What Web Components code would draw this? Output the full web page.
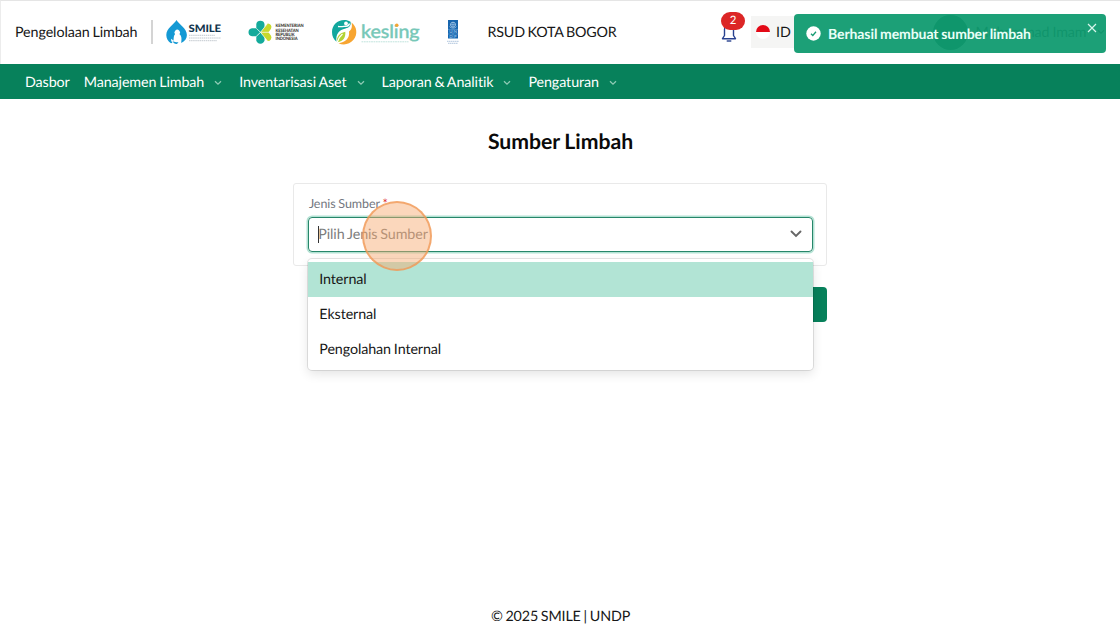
<!DOCTYPE html>
<html lang="id">
<head>
<meta charset="utf-8">
<title>Sumber Limbah</title>
<style>
    html, body {
        margin: 0;
        height: 100%;
        overflow: hidden;
        background: #fff;
        font-family: Lato, "Open Sans", sans-serif;
        font-size: 14.3px;
        letter-spacing: -.1px;
        word-spacing: -.7px;
        color: #171717;
        text-rendering: geometricPrecision;
    }
</style>
</head>
<body>
<smile-page>
    <app-header slot="header" program="Pengelolaan Limbah" entity="RSUD KOTA BOGOR"></app-header>
    <nav-bar slot="nav">
        <nav-item>Dasbor</nav-item>
        <nav-item menu>Manajemen Limbah</nav-item>
        <nav-item menu>Inventarisasi Aset</nav-item>
        <nav-item menu>Laporan &amp; Analitik</nav-item>
        <nav-item menu>Pengaturan</nav-item>
    </nav-bar>
    <form-card>
        <select-field label="Jenis Sumber" placeholder="Pilih Jenis Sumber">
            <select-option active>Internal</select-option>
            <select-option>Eksternal</select-option>
            <select-option>Pengolahan Internal</select-option>
        </select-field>
    </form-card>
    <span slot="footer">© 2025 SMILE | UNDP</span>
</smile-page>
<toast-message>Berhasil membuat sumber limbah</toast-message>
<click-marker></click-marker>

<script>
class BaseElement extends HTMLElement {
    constructor() {
        super();
        this.attachShadow({ mode: 'open' });
        const template = document.createElement('template');
        template.innerHTML = this.render();
        this.shadowRoot.appendChild(template.content.cloneNode(true));
    }

    render() {
        return '<slot></slot>';
    }
}

class SmilePage extends BaseElement {
    render() {
        return `
            <style>
                :host {
                    display: flex;
                    flex-direction: column;
                    height: 100%;
                }

                main {
                    flex: 1;
                    display: flex;
                    flex-direction: column;
                    align-items: center;
                    padding-top: 29px;
                }

                h1 {
                    margin: 0 0 28px 1px;
                    font-size: 21.2px;
                    line-height: 27px;
                    font-weight: 700;
                    letter-spacing: 0;
                    color: #0a0a0a;
                }

                footer {
                    padding-left: 1px;
                    text-align: center;
                    line-height: 18px;
                    letter-spacing: -.15px;
                }
            </style>
            <slot name="header"></slot>
            <slot name="nav"></slot>
            <main>
                <h1>Sumber Limbah</h1>
                <slot></slot>
            </main>
            <footer><slot name="footer"></slot></footer>
        `;
    }
}

class LogoSmile extends BaseElement {
    render() {
        return `
            <style>:host { display: block; width: 56px; height: 25px; } svg { display: block; overflow: visible; }</style>
            <svg width="56" height="25" viewBox="0 0 56 25">
                <path d="M10.500 0C8.500 4 .3 8 .3 15c0 3.500 1.700 6.500 4.700 8.300l1.500-.5C5.300 21.500 4.800 20 5.300 18.800l2.200 2C7.800 18 7.500 15.800 9 14.200a2.800 2.800 0 1 1 4.500 0c2.300 1.600 2.200 4.800 1.700 8.800 3.600-1.500 5.700-4.500 5.700-8C20.900 8 12.500 4 10.500 0z" fill="#1499d4"/>
                <path d="M6.500 20.700c1.500 1.400 3.500 1.700 6 1.200l-1.500 2c-2 .2-3.700-.8-4.500-3.200z" fill="#1499d4"/>
                <text x="22.500" y="12.200" font-family="Lato, sans-serif" font-size="10.200" font-weight="900" fill="#12344d" textLength="32.500" lengthAdjust="spacingAndGlyphs">SMILE</text>
                <g stroke="#b2bac2" stroke-width=".8" stroke-dasharray="1.500 .6">
                    <path d="M23 15.300h26"/><path d="M23 18h32"/><path d="M23 20.700h28"/>
                </g>
            </svg>
        `;
    }
}

class LogoKemenkes extends BaseElement {
    render() {
        return `
            <style>:host { display: block; width: 56px; height: 25px; } svg { display: block; overflow: visible; }</style>
            <svg width="56" height="25" viewBox="0 0 56 25">
                <path d="M8.300 4a4.200 4 0 0 1 8.200 0v5l-4 3.500-4.200-4z" fill="#13aa9b"/>
                <path d="M4 8.300h4.500l4 4-4 4H4a4 4 0 0 1-3.500-4 4 4 0 0 1 3.500-4z" fill="#13aa9b"/>
                <path d="M8.300 16.500l4.200-4 4 3.500v4.500a4.200 4 0 0 1-8.200 0z" fill="#13aa9b"/>
                <path d="M12.500 12.300L19.500 3.500a3.600 3.600 0 0 1 3.500 5.300l-2.500 3.500 2.500 3.500a3.600 3.600 0 0 1-3.500 5.300z" fill="#c6d92d"/>
                <path d="M8.300 8.300l4.200 4-4.200 4M12.500 12.300H23M12.500 12.300l7-8.800M12.500 12.300l7 8.800" fill="none" stroke="#fff" stroke-width=".7"/>
                <g font-family="Lato, sans-serif" font-size="4.500" font-weight="900" fill="#37342f">
                    <text x="27.500" y="7.200" textLength="28" lengthAdjust="spacingAndGlyphs">KEMENTERIAN</text>
                    <text x="27.500" y="11.600" textLength="23" lengthAdjust="spacingAndGlyphs">KESEHATAN</text>
                    <text x="27.500" y="16" textLength="19" lengthAdjust="spacingAndGlyphs">REPUBLIK</text>
                    <text x="27.500" y="20.400" textLength="22" lengthAdjust="spacingAndGlyphs">INDONESIA</text>
                </g>
            </svg>
        `;
    }
}

class LogoKesling extends BaseElement {
    render() {
        return `
            <style>:host { display: block; width: 88px; height: 25px; } svg { display: block; overflow: visible; }</style>
            <svg width="88" height="25" viewBox="0 0 88 25">
                <path d="M12.500 0C5 0 0 5.500 0 12c0 4 1.500 7.500 4.500 9.700C3.500 14 7 10 13.500 8.500 17 7.800 19.500 5.500 18.500 1.800 16.500.6 14.500 0 12.500 0z" fill="#12a79d"/>
                <path d="M19.500 2.500c5.500 4 6.500 12 2 17.300-4 4.800-10 5.700-15 3.400 6.500-.7 11.500-4.700 10.500-11.700 2.500-1.500 3.500-5 2.500-9z" fill="#f7a531"/>
                <path d="M5.300 22.300c-1.300-5 1.500-9 8-10.500.5 5.500-1.800 9.800-8 10.500z" fill="#b4d334"/>
                <circle cx="14" cy="3.400" r="1.900" fill="#fff"/>
                <path d="M6 6.500c3 .5 5 0 7.500-.3 2 .2 3.500-.8 4-2.700M5.300 22c1-3.500 2.800-6 5.200-8" fill="none" stroke="#fff" stroke-width="1.300"/>
                <text x="29" y="18" font-family="Lato, sans-serif" font-size="18.500" font-weight="500" fill="#77c8b8" stroke="#77c8b8" stroke-width=".35" textLength="58.500" lengthAdjust="spacingAndGlyphs">kesling</text>
                <circle cx="64.800" cy="5.200" r="1.700" fill="#f7a531"/>
                <path d="M29.500 21.800h47" stroke="#bfe3dc" stroke-width="1" stroke-dasharray="1.800 .6"/>
            </svg>
        `;
    }
}

class LogoUndp extends BaseElement {
    render() {
        return `
            <style>:host { display: block; width: 12px; height: 25px; } svg { display: block; overflow: visible; }</style>
            <svg width="12" height="25" viewBox="0 0 12 25">
                <path d="M1 0h10v18.500H1z" fill="#1765ae"/>
                <circle cx="6" cy="4.700" r="2.500" fill="none" stroke="#b9d5ee" stroke-width=".8"/>
                <path d="M3.500 4.700h5M6 2.200v5M2.500 6.500C3.500 8.700 8.500 8.700 9.500 6.500" fill="none" stroke="#b9d5ee" stroke-width=".6"/>
                <path d="M1 9.400h10M6 9.400v9M1 14h10" stroke="#7fb0dc" stroke-width=".5"/>
                <g font-family="Lato, sans-serif" font-size="4.200" font-weight="700" fill="#8ebbe2">
                    <text x="2.200" y="13.300">U</text><text x="6.800" y="13.300">N</text>
                    <text x="2.200" y="17.800">D</text><text x="6.900" y="17.800">P</text>
                </g>
                <path d="M0 21.300h12M1 23.300h10" stroke="#a8bfda" stroke-width=".9" stroke-dasharray="1.500 .4"/>
            </svg>
        `;
    }
}

class NotificationBell extends BaseElement {
    render() {
        return `
            <style>
                :host {
                    display: block;
                    position: relative;
                    width: 16px;
                    height: 19px;
                }

                svg { display: block; }

                .badge {
                    position: absolute;
                    left: 0;
                    top: -10.5px;
                    width: 24px;
                    height: 18px;
                    border-radius: 9px;
                    background: #dc2626;
                    color: #fff;
                    font-size: 11.5px;
                    line-height: 18px;
                    text-align: center;
                }
            </style>
            <svg width="16" height="19" viewBox="0 0 16 19" fill="none" stroke="#28418f" stroke-width="1.400">
                <path d="M3.500 12.500V6.500a4.500 4.500 0 0 1 9 0v6l2 3.200h-13z" stroke-linejoin="round"/>
                <path d="M5.700 18h4.600"/>
            </svg>
            <span class="badge">2</span>
        `;
    }
}

class AppHeader extends BaseElement {
    static observedAttributes = ['program', 'entity'];

    attributeChangedCallback(name, oldValue, value) {
        this.shadowRoot.querySelector('.' + name).textContent = value;
    }

    render() {
        return `
            <style>
                :host {
                    display: flex;
                    align-items: center;
                    box-sizing: border-box;
                    height: 64.4px;
                    padding: 0 0 1px 14px;
                    border-top: 1px solid #e5e5e5;
                    border-left: 1px solid #ececec;
                    white-space: nowrap;
                }

                .program { width: 136px; }
                .divider { width: 1.5px; height: 24px; background: #d4d4d4; }
                logo-smile { margin-left: 13px; }
                logo-kemenkes { margin-left: 26.5px; }
                logo-kesling { margin-left: 27.5px; }
                logo-undp { margin-left: 27px; }
                .entity { margin-left: 29px; width: 233.5px; letter-spacing: -.2px; }

                .lang {
                    display: flex;
                    align-items: center;
                    gap: 6px;
                    width: 70px;
                    height: 32px;
                    margin-left: 13.5px;
                    padding-left: 5px;
                    background: #f5f5f4;
                }

                .flag {
                    width: 14.5px;
                    height: 14.5px;
                    border-radius: 50%;
                    background: linear-gradient(#e30a17 50%, #fff 50%);
                }

                .avatar {
                    width: 35px;
                    height: 35px;
                    margin-left: 107px;
                    border-radius: 50%;
                    background: #033d2b;
                }

                .user { margin-left: 8px; }
                .more { margin-left: 10px; }
            </style>
            <span class="program"></span>
            <span class="divider"></span>
            <logo-smile></logo-smile>
            <logo-kemenkes></logo-kemenkes>
            <logo-kesling></logo-kesling>
            <logo-undp></logo-undp>
            <span class="entity"></span>
            <notification-bell></notification-bell>
            <div class="lang"><span class="flag"></span>ID</div>
            <span class="avatar"></span>
            <span class="user">Muhammad Imam</span>
            <svg class="more" width="8" height="6" viewBox="0 0 8 6" fill="none" stroke="#222" stroke-width="1.300">
                <path d="M1 1.200l3 3 3-3"/>
            </svg>
        `;
    }
}

class NavBar extends BaseElement {
    render() {
        return `
            <style>
                :host {
                    display: flex;
                    align-items: center;
                    gap: 14px;
                    box-sizing: border-box;
                    height: 34.6px;
                    padding: 1px 0 0 25px;
                    background: #07815b;
                    color: #fff;
                }
            </style>
            <slot></slot>
        `;
    }
}

class NavItem extends BaseElement {
    render() {
        return `
            <style>
                :host {
                    display: flex;
                    align-items: center;
                    white-space: nowrap;
                }

                svg { display: none; margin: 1px 3px 0 10px; }
                :host([menu]) svg { display: block; }
            </style>
            <slot></slot>
            <svg width="8" height="6" viewBox="0 0 8 6" fill="none" stroke="#8fcbb5" stroke-width="1.300">
                <path d="M1 1.200l3 3 3-3"/>
            </svg>
        `;
    }
}

class FormCard extends BaseElement {
    render() {
        return `
            <style>
                :host {
                    display: flex;
                    flex-direction: column;
                    align-items: flex-end;
                    gap: 21.5px;
                    width: 534px;
                    margin-left: .6px;
                }

                section {
                    box-sizing: border-box;
                    width: 100%;
                    height: 83px;
                    padding: 12px 13.5px 12px 14px;
                    border: 1px solid #e9e9e9;
                    border-radius: 3px;
                }

                button {
                    width: 90px;
                    height: 35px;
                    border: 0;
                    border-radius: 4px;
                    background: #07815b;
                }
            </style>
            <section><slot></slot></section>
            <button type="button" aria-label="Simpan"></button>
        `;
    }
}

class SelectField extends BaseElement {
    static observedAttributes = ['label', 'placeholder'];

    attributeChangedCallback(name, oldValue, value) {
        this.shadowRoot.querySelector('.' + name).textContent = value;
    }

    render() {
        return `
            <style>
                :host {
                    display: block;
                    position: relative;
                }

                .top {
                    padding-left: .6px;
                    font-size: 12.5px;
                    letter-spacing: -.08px;
                    word-spacing: -.3px;
                    line-height: 16px;
                    color: #737780;
                }

                .top b { color: #dc2626; font-weight: 400; }

                .control {
                    display: flex;
                    align-items: center;
                    justify-content: space-between;
                    box-sizing: border-box;
                    height: 35px;
                    margin-top: 5px;
                    padding: 0 10px 0 9px;
                    border: 1px solid #27866a;
                    border-radius: 4px;
                    box-shadow: 0 0 0 1.5px #b2e2d3;
                    color: #7d7d7d;
                }

                .value { display: flex; align-items: center; }
                .caret { width: 1px; height: 17px; margin-right: -1px; background: #333; }

                .menu {
                    position: absolute;
                    left: 0;
                    right: 0;
                    top: 63px;
                    height: 111px;
                    box-sizing: border-box;
                    padding-top: 3px;
                    border-radius: 4px;
                    background: #fff;
                    box-shadow: 0 0 0 1px rgba(0, 0, 0, .1), 0 4px 11px rgba(0, 0, 0, .11);
                }
            </style>
            <div class="top"><span class="label"></span> <b>*</b></div>
            <div class="control">
                <span class="value"><i class="caret"></i><span class="placeholder"></span></span>
                <svg width="12" height="8" viewBox="0 0 12 8" fill="none" stroke="#666" stroke-width="1.900" stroke-linecap="round">
                    <path d="M1.500 1.500L6 6l4.500-4.500"/>
                </svg>
            </div>
            <div class="menu"><slot></slot></div>
        `;
    }
}

class SelectOption extends BaseElement {
    render() {
        return `
            <style>
                :host {
                    display: block;
                    height: 34.9px;
                    padding-left: 11px;
                    line-height: 36px;
                }

                :host([active]) { background: #b2e4d5; }
            </style>
            <slot></slot>
        `;
    }
}

class ToastMessage extends BaseElement {
    render() {
        return `
            <style>
                :host {
                    position: absolute;
                    left: 794px;
                    top: 14px;
                    display: flex;
                    align-items: center;
                    box-sizing: border-box;
                    width: 312px;
                    height: 38.5px;
                    padding-left: 12px;
                    border-radius: 4px;
                    background: rgba(16, 155, 112, .95);
                    color: #e9fff7;
                    font-weight: 700;
                    font-size: 14px;
                    letter-spacing: -.09px;
                    word-spacing: -.5px;
                }

                .text { margin-left: 7px; white-space: nowrap; }
                .close { position: absolute; right: 9px; top: 9px; }
            </style>
            <svg width="15" height="15" viewBox="0 0 15 15">
                <circle cx="7.500" cy="7.500" r="7.200" fill="#fff"/>
                <path d="M5 7.700l1.800 1.800 3.200-3.700" fill="none" stroke="#149b71" stroke-width="1.300"/>
            </svg>
            <span class="text"><slot></slot></span>
            <svg class="close" width="10" height="10" viewBox="0 0 10 10" stroke="#d9f5eb" stroke-width="1.200">
                <path d="M1 1l8 8M9 1L1 9"/>
            </svg>
        `;
    }
}

class ClickMarker extends BaseElement {
    render() {
        return `
            <style>
                :host {
                    position: absolute;
                    left: 362px;
                    top: 201px;
                    box-sizing: border-box;
                    width: 70px;
                    height: 70px;
                    border: 2.5px solid rgba(240, 150, 82, .72);
                    border-radius: 50%;
                    background: rgba(246, 170, 112, .47);
                }
            </style>
        `;
    }
}

customElements.define('smile-page', SmilePage);
customElements.define('logo-smile', LogoSmile);
customElements.define('logo-kemenkes', LogoKemenkes);
customElements.define('logo-kesling', LogoKesling);
customElements.define('logo-undp', LogoUndp);
customElements.define('notification-bell', NotificationBell);
customElements.define('app-header', AppHeader);
customElements.define('nav-bar', NavBar);
customElements.define('nav-item', NavItem);
customElements.define('form-card', FormCard);
customElements.define('select-field', SelectField);
customElements.define('select-option', SelectOption);
customElements.define('toast-message', ToastMessage);
customElements.define('click-marker', ClickMarker);
</script>
</body>
</html>
